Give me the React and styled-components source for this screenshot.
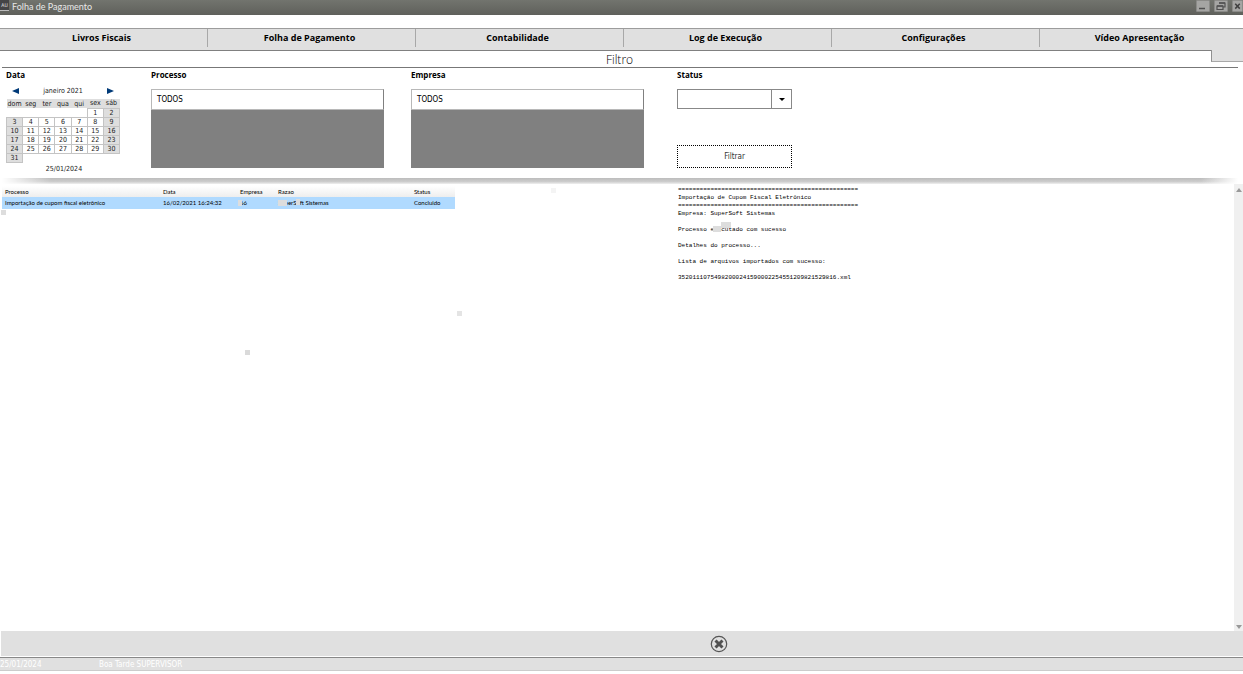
import React, { useState } from 'react';
import styled, { createGlobalStyle } from 'styled-components';

const tabs = [
  'Livros Fiscais',
  'Folha de Pagamento',
  'Contabilidade',
  'Log de Execução',
  'Configurações',
  'Vídeo Apresentação',
];

const weekDays = ['dom', 'seg', 'ter', 'qua', 'qui', 'sex', 'sáb'];

const weeks = [
  ['', '', '', '', '', 1, 2],
  [3, 4, 5, 6, 7, 8, 9],
  [10, 11, 12, 13, 14, 15, 16],
  [17, 18, 19, 20, 21, 22, 23],
  [24, 25, 26, 27, 28, 29, 30],
  [31, '', '', '', '', '', ''],
];

const line = '='.repeat(50);

export default function App() {
  const [status, setStatus] = useState('');

  return (
    <PageStyle>
      <GlobalStyle />
      <TitleBarStyle>
        <AppIconStyle>AU</AppIconStyle>
        <TitleStyle>Folha de Pagamento</TitleStyle>
        <WindowButtonStyle aria-label='Minimizar'>
          <svg width='12' height='10' viewBox='0 0 12 10'>
            <path d='M2 7.500h6' stroke='#505050' strokeWidth='1.500' />
          </svg>
        </WindowButtonStyle>
        <WindowButtonStyle aria-label='Restaurar'>
          <svg width='12' height='10' viewBox='0 0 12 10' fill='none'>
            <path d='M4 2h6v4H8' stroke='#505050' strokeWidth='1.200' />
            <path d='M2 5h6v3.500H2z' stroke='#505050' strokeWidth='1.200' />
            <path d='M2 5h6M4 2h6' stroke='#505050' strokeWidth='1.600' />
          </svg>
        </WindowButtonStyle>
        <WindowButtonStyle aria-label='Fechar'>
          <svg width='12' height='10' viewBox='0 0 12 10'>
            <path d='M3 2l6 6.500M9 2l-6 6.500' stroke='#404040' strokeWidth='2' />
          </svg>
        </WindowButtonStyle>
      </TitleBarStyle>

      <TabBarStyle>
        {tabs.map(tab => (
          <TabStyle key={tab}>{tab}</TabStyle>
        ))}
      </TabBarStyle>

      <FilterHeaderStyle>
        <FilterTitleStyle>Filtro</FilterTitleStyle>
        <NotchStyle />
      </FilterHeaderStyle>

      <FilterPanelStyle>
        <FieldStyle>
          <LabelStyle as='div'>Data</LabelStyle>
          <Calendar />
        </FieldStyle>
        <FieldStyle>
          <LabelStyle as='div'>Processo</LabelStyle>
          <ListBoxStyle>
            <ListItemStyle>TODOS</ListItemStyle>
          </ListBoxStyle>
        </FieldStyle>
        <FieldStyle>
          <LabelStyle as='div'>Empresa</LabelStyle>
          <ListBoxStyle>
            <ListItemStyle>TODOS</ListItemStyle>
          </ListBoxStyle>
        </FieldStyle>
        <FieldStyle>
          <LabelStyle htmlFor='status'>Status</LabelStyle>
          <SelectWrapStyle>
            <SelectStyle
              id='status'
              value={status}
              onChange={e => setStatus(e.target.value)}
            >
              <option value='' />
            </SelectStyle>
            <SelectArrowStyle>
              <svg width='6' height='3' viewBox='0 0 6 3'>
                <path d='M0 0h6L3 3z' fill='#000' />
              </svg>
            </SelectArrowStyle>
          </SelectWrapStyle>
          <FilterButtonStyle>Filtrar</FilterButtonStyle>
        </FieldStyle>
      </FilterPanelStyle>
      <PanelShadowStyle />

      <ResultsStyle>
        <TablePaneStyle>
          <ResultTableStyle>
            <colgroup>
              <col width='158' />
              <col width='77' />
              <col width='38' />
              <col width='136' />
              <col width='44' />
            </colgroup>
            <thead>
              <tr>
                <th>Processo</th>
                <th>Data</th>
                <th>Empresa</th>
                <th>Razao</th>
                <th>Status</th>
              </tr>
            </thead>
            <tbody>
              <tr>
                <td>Importação de cupom fiscal eletrônico</td>
                <td>16/02/2021 16:24:32</td>
                <td>
                  <MaskedStyle>
                    66
                    <MaskStyle $left='-2px' $top='1px' $width='4px' />
                  </MaskedStyle>
                </td>
                <td>
                  <MaskedStyle>
                    SuperSoft Sistemas
                    <MaskStyle $left='0' $top='1px' $width='9px' />
                    <MaskStyle $left='18px' $top='0' $width='4px' />
                  </MaskedStyle>
                </td>
                <td>Concluido</td>
              </tr>
            </tbody>
          </ResultTableStyle>
          <SpeckStyle $left='1px' $top='26px' $color='#dddddd' />
          <SpeckStyle $left='551px' $top='4px' $color='#f4f4f4' />
          <SpeckStyle $left='457px' $top='127px' $color='#e4e4e4' />
          <SpeckStyle $left='245px' $top='166px' $color='#dadada' />
        </TablePaneStyle>
        <LogPaneStyle>
          <div>{line}</div>
          <div>Importação de Cupom Fiscal Eletrônico</div>
          <div>{line}</div>
          <div>Empresa: SuperSoft Sistemas</div>
          <br />
          <div>
            Processo{' '}
            <MaskedStyle>
              executado
              <MaskStyle $left='3px' $top='0' $width='8px' />
              <MaskStyle $left='11px' $top='-4px' $width='10px' />
            </MaskedStyle>{' '}
            com sucesso
          </div>
          <br />
          <div>Detalhes do processo...</div>
          <br />
          <div>Lista de arquivos importados com sucesso:</div>
          <br />
          <div>35201110754982000241590002254551209821529816.xml</div>
        </LogPaneStyle>
        <ScrollBarStyle>
          <svg width='6' height='4' viewBox='0 0 6 4'>
            <path d='M0 4h6L3 0z' fill='#999' />
          </svg>
          <svg width='6' height='4' viewBox='0 0 6 4'>
            <path d='M0 0h6L3 4z' fill='#999' />
          </svg>
        </ScrollBarStyle>
      </ResultsStyle>

      <ActionBarStyle>
        <CloseButtonStyle aria-label='Fechar tela'>
          <svg width='18' height='18' viewBox='0 0 18 18' fill='none'>
            <circle cx='9' cy='9' r='7.700' stroke='#555' strokeWidth='1.200' />
            <path d='M5.500 5.500l7 7M12.500 5.500l-7 7' stroke='#505050' strokeWidth='3' />
          </svg>
        </CloseButtonStyle>
      </ActionBarStyle>
      <StatusBarStyle>
        <StatusDateStyle>25/01/2024</StatusDateStyle>
        <div>Boa Tarde SUPERVISOR</div>
      </StatusBarStyle>
    </PageStyle>
  );
}

function Calendar() {
  return (
    <CalendarStyle>
      <MonthStyle>
        <MonthButtonStyle aria-label='Mês anterior'>
          <svg width='7' height='6' viewBox='0 0 7 6'>
            <path d='M7 0v6L0 3z' fill='#003a78' />
          </svg>
        </MonthButtonStyle>
        <span>janeiro 2021</span>
        <MonthButtonStyle aria-label='Próximo mês'>
          <svg width='7' height='6' viewBox='0 0 7 6'>
            <path d='M0 0v6l7-3z' fill='#003a78' />
          </svg>
        </MonthButtonStyle>
      </MonthStyle>
      <DaysStyle>
        <thead>
          <tr>
            {weekDays.map(day => (
              <th key={day}>{day}</th>
            ))}
          </tr>
        </thead>
        <tbody>
          {weeks.map((week, i) => (
            <tr key={i}>
              {week.map((day, j) => (
                <DayStyle key={j} $empty={!day} $weekend={j === 0 || j === 6}>
                  {day}
                </DayStyle>
              ))}
            </tr>
          ))}
        </tbody>
      </DaysStyle>
      <TodayStyle>25/01/2024</TodayStyle>
    </CalendarStyle>
  );
}

const GlobalStyle = createGlobalStyle`
  * {
    box-sizing: border-box;
  }

  body {
    margin: 0;
    background: #ffffff;
    color: #000000;
    font-family: 'DejaVu Sans Condensed', 'DejaVu Sans', sans-serif;
    font-size: 8px;
  }

  button,
  select {
    font-family: inherit;
    font-size: inherit;
    padding: 0;
    border-radius: 0;
  }
`;

const PageStyle = styled.div`
  display: flex;
  flex-direction: column;
  min-height: 100vh;
`;

const TitleBarStyle = styled.header`
  display: flex;
  align-items: center;
  height: 15px;
  margin-bottom: 13px;
  background: linear-gradient(#72746e, #5f605b);
  color: #e8e8e8;
`;

const AppIconStyle = styled.span`
  width: 9px;
  height: 11px;
  margin-bottom: 4px;
  background: #444446;
  border-bottom: 1px solid #bbbbbb;
  font-size: 5px;
  line-height: 11px;
  text-align: center;
`;

const TitleStyle = styled.h1`
  flex: 1;
  margin: 0 0 2px 3px;
  font-family: Lato, sans-serif;
  font-size: 9px;
  font-weight: normal;
  line-height: 12px;
`;

const WindowButtonStyle = styled.button`
  display: flex;
  width: 14px;
  height: 12px;
  margin: 0 0 3px 4px;
  background: #a5a5a3;
  border: 1px solid #8b8b88;
  border-radius: 1px;

  &:last-child {
    width: 11px;
  }
`;

const TabBarStyle = styled.nav`
  display: grid;
  grid-template-columns: repeat(5, 208fr) 203fr;
  height: 22px;
  background: #e0e0e0;
  border-top: 1px solid #9c9c9c;
`;

const TabStyle = styled.button`
  height: 18px;
  padding: 0 4px 2px 0;
  background: none;
  border: 0;
  border-right: 1px solid #a8a8a8;
  font-family: 'Open Sans', sans-serif;
  font-size: 9px;
  font-weight: bold;

  &:last-child {
    border-right: 0;
  }
`;

const FilterHeaderStyle = styled.div`
  display: flex;
  align-items: flex-start;
  height: 17px;
`;

const FilterTitleStyle = styled.h2`
  flex: 1;
  height: 17px;
  margin: 0;
  padding: 1px 0 0 28px;
  border-top: 1px solid #808080;
  color: #000000;
  font-family: 'Open Sans', sans-serif;
  font-size: 12px;
  font-weight: 300;
  line-height: 15px;
  text-align: center;
`;

const NotchStyle = styled.div`
  width: 32px;
  height: 12px;
  background: #e0e0e0;
  border-bottom: 1px solid #a8a8a8;
  border-left: 1px solid #909090;
`;

const FilterPanelStyle = styled.form.attrs({
  onSubmit: e => e.preventDefault(),
})`
  display: grid;
  grid-template-columns: 145fr 260fr 266fr 561fr;
  height: 111px;
  margin: 0 5px 0 2px;
  padding-left: 4px;
  border-top: 1px solid #777777;
`;

const FieldStyle = styled.div`
  padding-top: 2px;
`;

const LabelStyle = styled.label`
  display: block;
  font-family: 'Open Sans', sans-serif;
  font-weight: bold;
  line-height: 10px;
`;

const CalendarStyle = styled.div`
  width: 114px;
  margin-top: 5px;
  color: #222222;
  font-size: 7px;
`;

const MonthStyle = styled.div`
  display: flex;
  align-items: center;
  justify-content: space-between;
  height: 12px;
  padding: 0 6px;
`;

const MonthButtonStyle = styled.button`
  display: flex;
  background: none;
  border: 0;
`;

const DaysStyle = styled.table`
  width: 100%;
  margin-top: 2px;
  border-collapse: collapse;
  table-layout: fixed;
  line-height: 8px;
  text-align: center;

  th {
    height: 9px;
    padding: 0;
    background: #dedede;
    font-weight: normal;
  }
`;

const DayStyle = styled.td`
  padding: 0;
  border: ${props => (props.$empty ? '0' : '1px solid #c4c4c4')};
  background: ${props => (props.$weekend && !props.$empty ? '#dedede' : '#ffffff')};
`;

const TodayStyle = styled.div`
  margin-top: 1px;
  padding-left: 2px;
  line-height: 10px;
  text-align: center;
`;

const ListBoxStyle = styled.div`
  width: 233px;
  height: 79px;
  margin-top: 9px;
  background: #808080;
`;

const ListItemStyle = styled.div`
  height: 21px;
  padding-left: 5px;
  background: #ffffff;
  border: 1px solid #b8b8b8;
  border-right-color: #808080;
  line-height: 19px;
`;

const SelectWrapStyle = styled.div`
  display: flex;
  position: relative;
  width: 115px;
  height: 20px;
  margin: 9px 0 36px;
`;

const SelectStyle = styled.select`
  width: 100%;
  appearance: none;
  background: #ffffff;
  border: 1px solid #888888;
`;

const SelectArrowStyle = styled.span`
  position: absolute;
  top: 0;
  right: 0;
  display: flex;
  align-items: center;
  justify-content: center;
  width: 21px;
  height: 100%;
  border: 1px solid #888888;
  pointer-events: none;
`;

const FilterButtonStyle = styled.button`
  display: block;
  width: 115px;
  height: 23px;
  background: #ffffff;
  border: 1px dotted #000000;
  color: #333333;
`;

const PanelShadowStyle = styled.div`
  height: 6px;
  margin: 0 5px 0 2px;
  background: linear-gradient(90deg, #ffffff, transparent 4%, transparent 97%, #ffffff),
    linear-gradient(#bcbcbc, #cccccc 60%, #f0f0f0);
`;

const ResultsStyle = styled.main`
  display: grid;
  grid-template-columns: 678fr 556fr 9px;
  flex: 1;
`;

const TablePaneStyle = styled.section`
  position: relative;
  padding: 2px 0 0 2px;
`;

const ResultTableStyle = styled.table`
  width: 453px;
  border-collapse: collapse;
  table-layout: fixed;
  font-family: Lato, sans-serif;
  font-size: 6px;
  line-height: 8px;
  text-align: left;

  th {
    height: 11px;
    padding: 0 3px;
    background: linear-gradient(#ffffff, #eeeeee);
    font-weight: normal;
  }

  td {
    height: 12px;
    padding: 0 3px;
    background: #b0daff;
    white-space: nowrap;
  }
`;

const MaskedStyle = styled.span`
  position: relative;
`;

const MaskStyle = styled.span`
  position: absolute;
  top: ${props => props.$top};
  left: ${props => props.$left};
  width: ${props => props.$width};
  height: 6px;
  background: #dddddd;
`;

const SpeckStyle = styled.span`
  position: absolute;
  top: ${props => props.$top};
  left: ${props => props.$left};
  width: 5px;
  height: 5px;
  background: ${props => props.$color};
`;

const LogPaneStyle = styled.section`
  padding-top: 2px;
  font-family: 'Liberation Mono', monospace;
  font-size: 6px;
  line-height: 8px;
`;

const ScrollBarStyle = styled.div`
  display: flex;
  flex-direction: column;
  align-items: center;
  justify-content: space-between;
  padding: 4px 0 2px;
  background: #f0f0f0;
`;

const ActionBarStyle = styled.footer`
  display: flex;
  align-items: center;
  justify-content: center;
  height: 25px;
  margin: 0 0 1px 1px;
  padding-left: 194px;
  background: #e0e0e0;
`;

const CloseButtonStyle = styled.button`
  display: flex;
  background: none;
  border: 0;
`;

const StatusBarStyle = styled.div`
  display: flex;
  height: 14px;
  margin-bottom: 3px;
  background: #e0e0e0;
  border-top: 1px solid #888888;
  border-bottom: 1px solid #cccccc;
  color: #ffffff;
  line-height: 13px;
`;

const StatusDateStyle = styled.div`
  width: 99px;
`;
